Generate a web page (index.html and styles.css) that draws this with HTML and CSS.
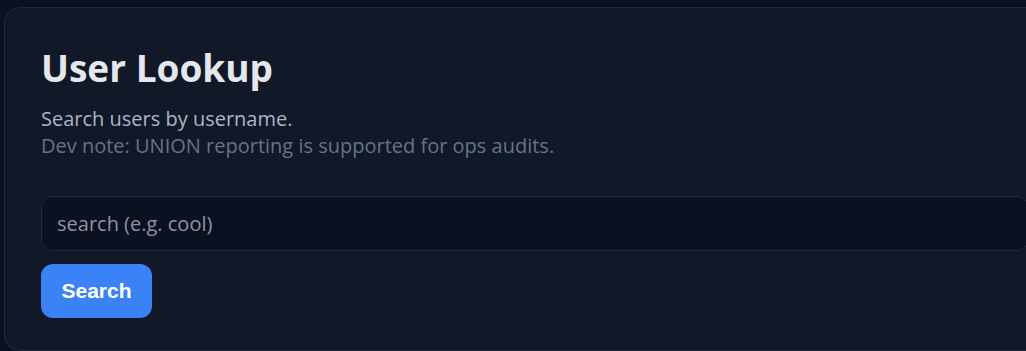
FILE: index.html
```html
<!DOCTYPE html>
<html lang="en">
<head>
    <meta charset="UTF-8">
    <meta name="viewport" content="width=device-width, initial-scale=1.0">
    <title>User Lookup</title>
    <link rel="stylesheet" href="styles.css">
</head>

<body>
    <div class="card">
        <h1>User Lookup</h1>
        <p class="lead">Search users by username.</p>
        <p class="note">Dev note: UNION reporting is supported for ops audits.</p>

        <form class="search-form" action="/search" method="GET">
            <input type="text" name="q" class="search-input" placeholder="search (e.g. cool)">
            <button type="submit" class="search-button">Search</button>
        </form>
    </div>
</body>

</html>
```

FILE: styles.css
```css
html,
body {
    height: 100%;
}

body {
    font-family: "Open Sans", "Noto Sans", Arial, sans-serif;
    background-color: #0b1120;
    margin: 0;
    padding: 7px 0 0 4px;
    overflow: hidden;
    box-sizing: border-box;
}

.card {
    width: calc(100% + 40px);
    height: 344px;
    box-sizing: border-box;
    background-color: #111827;
    border: 1px solid #1f2937;
    border-radius: 16px;
    padding: 33px 36px;
}

.card h1 {
    margin: 0 0 10px;
    font-size: 37px;
    line-height: 54px;
    font-weight: 700;
    color: #e5e7eb;
}

.lead,
.note {
    margin: 0;
    font-size: 20px;
    line-height: 27px;
}

.lead {
    color: #aab6c7;
}

.note {
    color: #64748b;
}

.search-form {
    margin-top: 37px;
    display: flex;
    flex-direction: column;
    align-items: flex-start;
    gap: 13px;
}

.search-input {
    width: 100%;
    height: 55px;
    box-sizing: border-box;
    padding: 0 15px;
    background-color: #0b1120;
    border: 1px solid #1f2937;
    border-radius: 12px;
    font-family: "Open Sans", "Noto Sans", Arial, sans-serif;
    font-size: 20px;
    color: #e5e7eb;
}

.search-input::placeholder {
    color: #8b95a3;
}

.search-button {
    width: 111px;
    height: 54px;
    background-color: #3b82f6;
    color: white;
    border: none;
    border-radius: 12px;
    font-family: "Liberation Sans", Arial, sans-serif;
    font-weight: 700;
    font-size: 21px;
    cursor: pointer;
}
```
